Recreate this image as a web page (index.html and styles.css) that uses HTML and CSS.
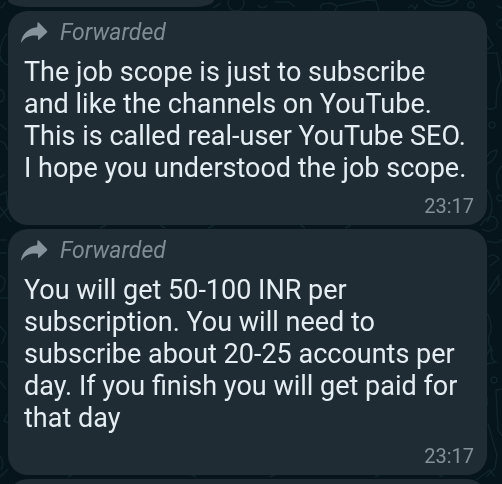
FILE: index.html
```html
<!DOCTYPE html>
<html lang="en">
<head>
  <meta charset="UTF-8" />
  <meta name="viewport" content="width=device-width, initial-scale=1" />
  <title>Chat</title>
  <link rel="stylesheet" href="styles.css">
</head>
<body>
  <!-- Wallpaper doodles -->
  <svg class="wallpaper" viewBox="0 0 502 484" preserveAspectRatio="xMaxYMin slice" aria-hidden="true">
    <!-- top strip -->
    <circle cx="236" cy="3" r="8" />
    <path d="M213 8l8-5M258 5a5 5 0 0 0 9 0M275 2h14l6 5" />
    <path d="M320 9l2-5 9-1 6 3 15-3 16-3 8 1 3 10M337 6l-2 5M408 8l4-3 3 4 3-5" />
    <path d="M424 0a18 9 0 0 0 34 0M432 0a10 4 0 0 0 18 0" />
    <circle cx="471" cy="5" r="3" />
    <!-- right side -->
    <path d="M497 5a7 7 0 0 0 5 3M487 35l6 10-6 5M487 53h10l4 26-4 11-1 17q-4 4-9 1" />
    <circle cx="501" cy="24" r="4" />
    <circle cx="492" cy="125" r="3" />
    <path d="M487 164q9-4 10-14-7 1-10 7M502 166q-9 8-3 23M487 190q10 15 0 32M480 226q8-12 14-9t2 11q-7 6-14 1" />
    <circle cx="500" cy="198" r="3" />
    <path d="M487 241q12 4 15-2M488 257q6-5 11 2l-9 7M488 292l10-16 1 8-9 11M487 313q7 13 2 23-2 8 4 15M487 355l4-8 1 12 4 3-9 2" />
    <circle cx="494" cy="380" r="3" />
    <path d="M502 389l-6 1 2 40 4 6M487 397v9M488 424l9 31-2 13-9 9M476 480l14-10 5 7" />
    <!-- left side -->
    <path d="M0 8q4-1 5-6M7 33q-9 13-7 29M0 56q3 8 8 9M0 89q5 3 4 8t-4 5M0 124l7 6M0 141q6 1 7 9M5 174l-5 4M0 195l6-3 2 16-8 9M0 207l11 15M0 240h7M0 253h7M0 276q8 2 3 13l-3 3M0 298h8" />
    <path d="M0 326l6 7-4 11M0 362q7-2 8 6M0 381l6 8M7 414l-3 7 4 2M0 456q5 6 1 14M0 477l8-8" />
    <!-- gaps between the bubbles -->
    <path d="M100 228l6-3M160 225l5 3M208 228l7-3M300 225l5 3M345 228l6-3M68 477l5-3M190 474l6 3M270 477l6-3M375 477l5-3M438 474l5 3" />
  </svg>

  <main class="chat">
    <div class="message message-previous"></div>

    <article class="message">
      <div class="forwarded">
        <svg class="forward-icon" viewBox="0 0 28 22" aria-hidden="true">
          <path d="M17.500 0.500Q18.200 0 19 0.700L27 9Q27.600 9.800 27 10.500L19 17.800Q18 18.500 18 17.300V13.800C10.500 12.800 5.500 14.800 1.500 20.300Q0.800 20.800 1 19.700C2.600 12 8 6 17.200 5.200z" />
        </svg>
        <span>Forwarded</span>
      </div>
      <p class="text">The job scope is just to subscribe and like the channels on YouTube. This is called real-user YouTube SEO. I hope you understood the job scope.</p>
      <time class="time">23:17</time>
    </article>

    <article class="message">
      <div class="forwarded">
        <svg class="forward-icon" viewBox="0 0 28 22" aria-hidden="true">
          <path d="M17.500 0.500Q18.200 0 19 0.700L27 9Q27.600 9.800 27 10.500L19 17.800Q18 18.500 18 17.300V13.800C10.500 12.800 5.500 14.800 1.500 20.300Q0.800 20.800 1 19.700C2.600 12 8 6 17.200 5.200z" />
        </svg>
        <span>Forwarded</span>
      </div>
      <p class="text">You will get 50-100 INR per subscription. You will need to subscribe about 20-25 accounts per day. If you finish you will get paid for that day</p>
      <time class="time">23:17</time>
    </article>

    <div class="message message-next"></div>
  </main>
</body>
</html>
```

FILE: styles.css
```css
body {
  margin: 0;
  background: #06141b;
  color: #e4edf2;
  font-family: Roboto, "Liberation Sans", sans-serif;
}

/* Wallpaper */
.wallpaper {
  position: fixed;
  top: 0;
  left: 0;
  width: 100%;
  height: 100%;
  fill: none;
  stroke: #11242c;
  stroke-width: 1.5;
  z-index: -1;
}

/* Message list */
.chat {
  display: flex;
  flex-direction: column;
  gap: 4px;
  height: 100vh;
  padding: 0 15px 0 8px;
  box-sizing: border-box;
  overflow: hidden;
}

.message {
  display: flex;
  flex-direction: column;
  flex-shrink: 0;
  padding: 8px 13px 7px 16px;
  border-radius: 20px;
  background: #202c33;
}

/* Neighbouring messages, cut by the edges of the view */
.message-previous {
  width: 43%;
  height: 7px;
  padding: 0;
  border-radius: 0 0 20px 20px / 0 0 7px 7px;
}
.message-next {
  height: 40px;
  padding: 0;
}

/* Forwarded label */
.forwarded {
  display: flex;
  align-items: center;
  gap: 12px;
  margin-left: -4px;
  color: #7f8c94;
  font-size: 23px;
  line-height: 28px;
  font-style: italic;
}
.forward-icon {
  width: 28px;
  height: 22px;
  fill: #84939c;
}

.text {
  margin: 9px 0 0;
  font-size: 27px;
  line-height: 32px;
}

.time {
  align-self: flex-end;
  margin-top: 10px;
  color: #84919a;
  font-size: 20px;
  line-height: 24px;
}
```
